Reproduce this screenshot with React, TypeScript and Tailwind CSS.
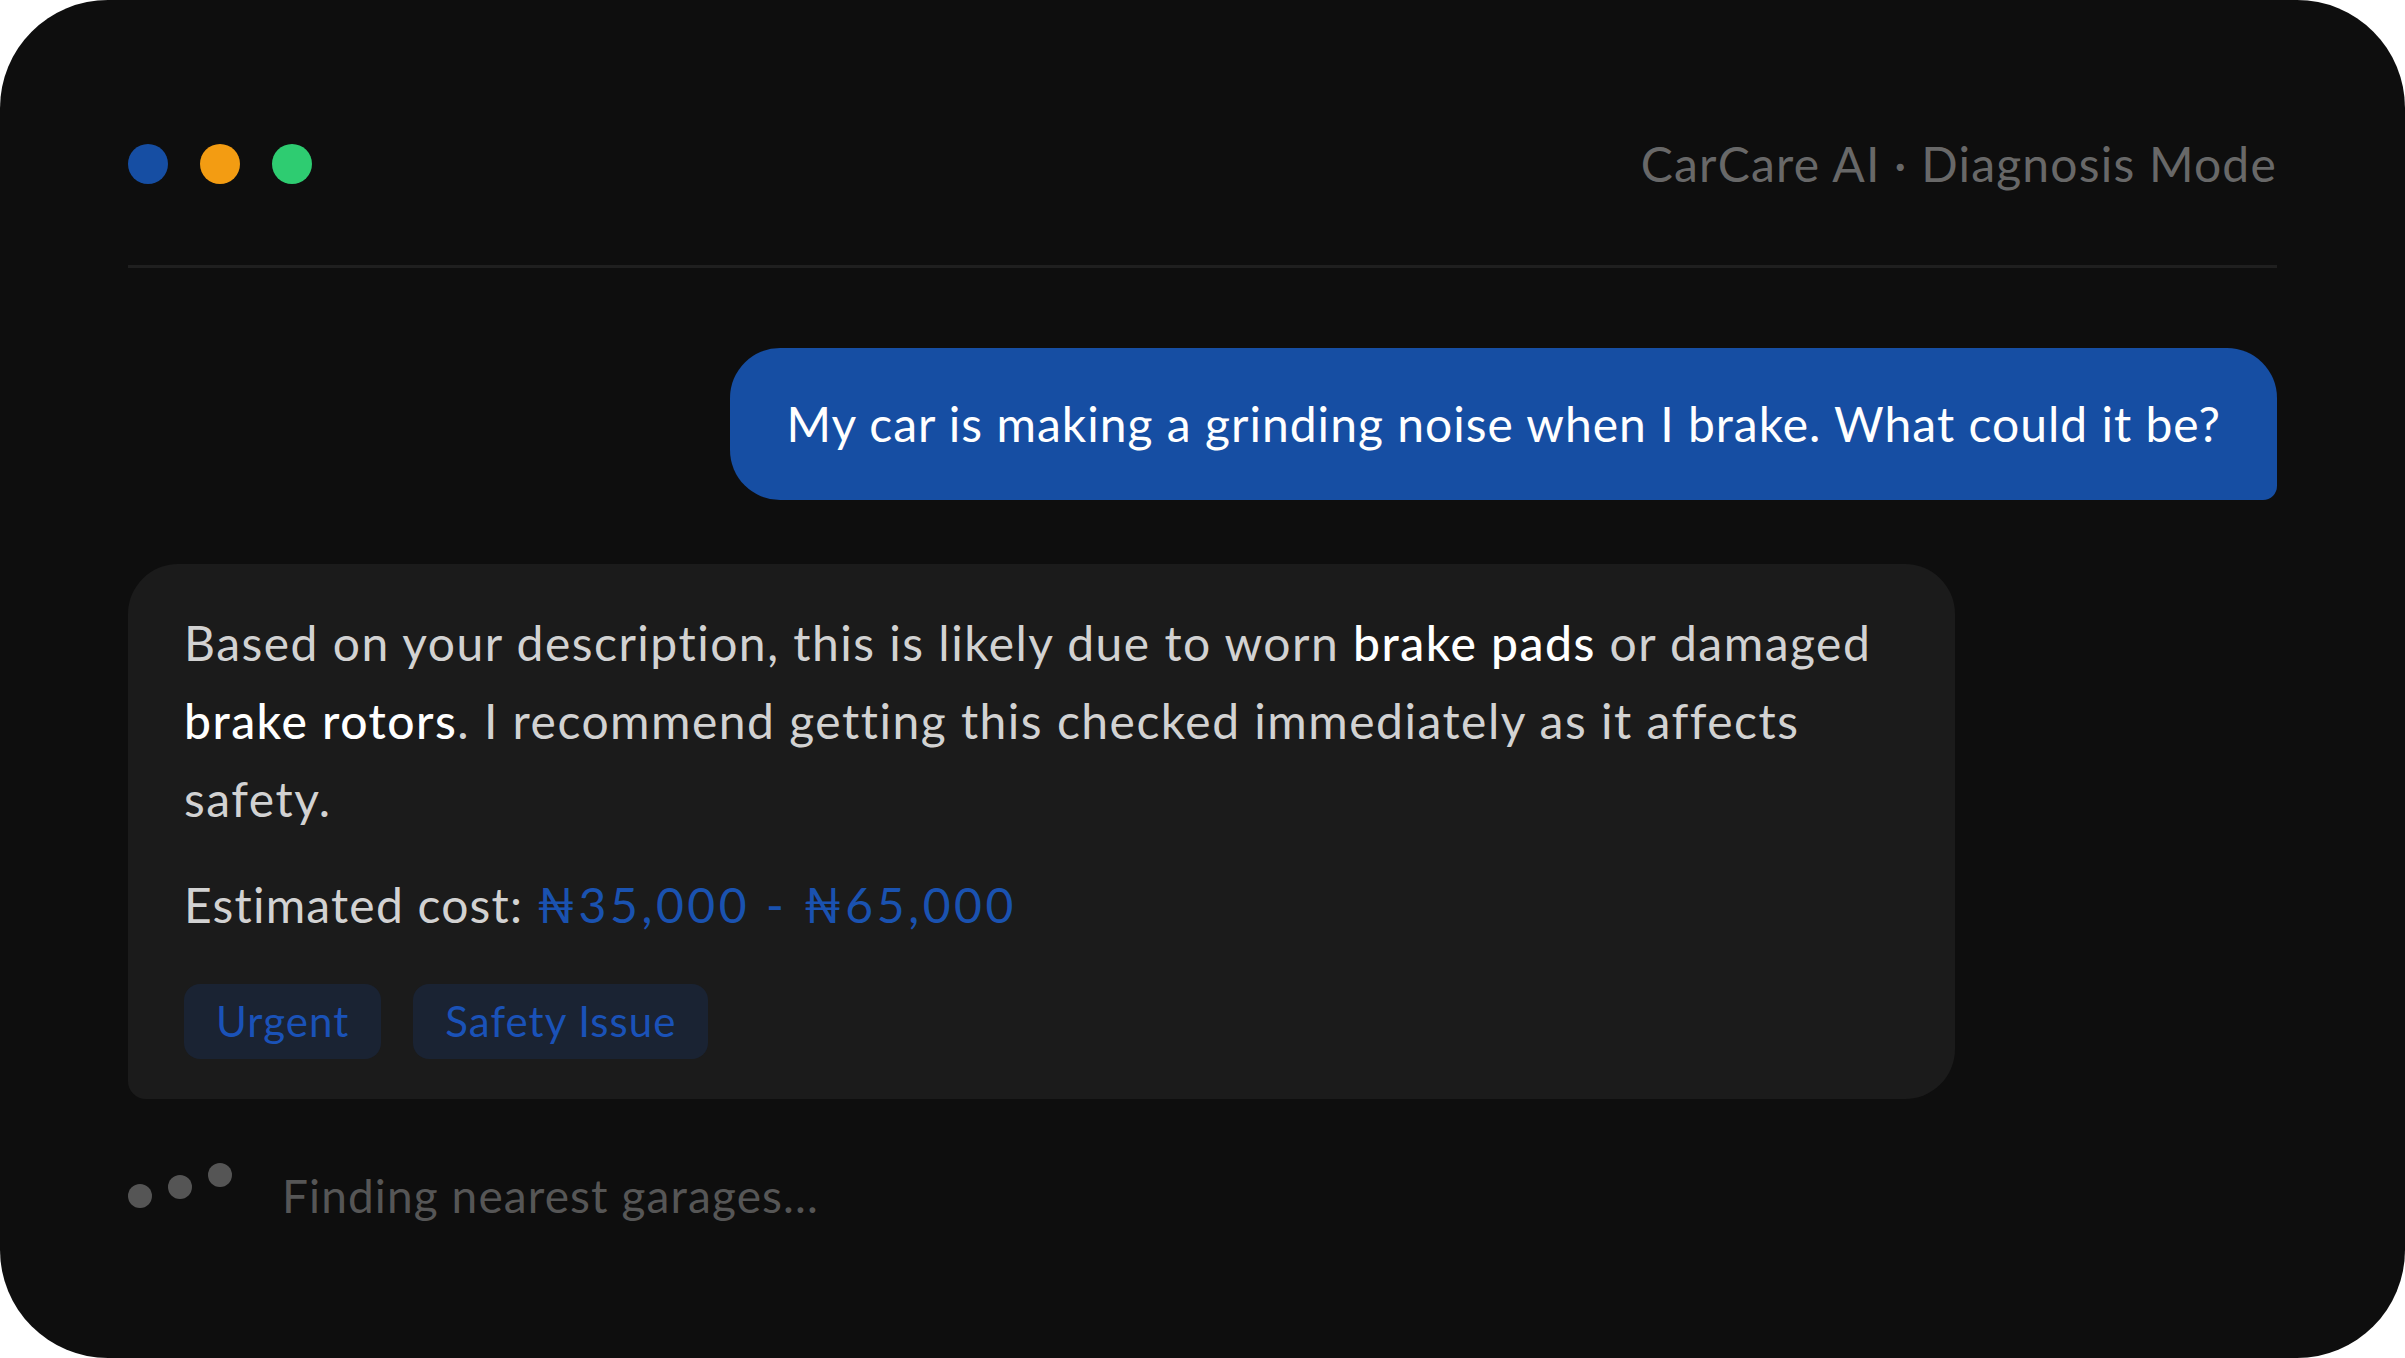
import React from "react";

type Tag = { label: string };

const tags: Tag[] = [{ label: "Urgent" }, { label: "Safety Issue" }];

const WindowDots = () => (
  <div className="flex items-center gap-8">
    <span className="size-10 rounded-full bg-[#164ea3]" />
    <span className="size-10 rounded-full bg-[#f39c12]" />
    <span className="size-10 rounded-full bg-[#2ecc71]" />
  </div>
);

const TypingIndicator = () => (
  <div className="flex h-[66px] items-center">
    <div className="flex items-center gap-4">
      <span className="size-6 rounded-full bg-[#555555]" />
      <span className="size-6 -translate-y-[9px] rounded-full bg-[#555555]" />
      <span className="size-6 -translate-y-[21px] rounded-full bg-[#555555]" />
    </div>
    <span className="ml-[50px] text-[46px] leading-[66px] tracking-[0.024em] text-[#565656]">
      Finding nearest garages...
    </span>
  </div>
);

const App = () => {
  return (
    <div className="min-h-screen bg-white">
      <div className="h-[1358px] w-full rounded-[108px] bg-[#0e0e0e] px-[128px] pt-[128px] font-['Lato',sans-serif]">
        {/* Window header */}
        <div className="flex h-[140px] items-start justify-between border-b-[3px] border-[#1f1f1f]">
          <div className="flex h-[72px] items-center">
            <WindowDots />
          </div>
          <span className="text-[48px] leading-[72px] tracking-[0.025em] text-[#686868]">
            CarCare AI · Diagnosis Mode
          </span>
        </div>

        {/* Conversation */}
        <div className="mt-[80px] flex flex-col gap-16">
          <div className="max-w-[85%] self-end rounded-[50px] rounded-br-[14px] bg-[#164ea3] px-14 py-10">
            <p className="text-[48px] leading-[72px] tracking-[0.021em] text-white">
              My car is making a grinding noise when I brake. What could it be?
            </p>
          </div>

          <div className="max-w-[85%] self-start rounded-[50px] rounded-bl-[18px] bg-[#1b1b1b] px-14 py-10">
            <p className="text-[48px] leading-[78px] tracking-[0.031em] text-[#d2d2d2]">
              Based on your description, this is likely due to worn{" "}
              <span className="font-medium text-white">brake pads</span> or damaged{" "}
              <span className="font-medium text-white">brake rotors</span>. I recommend getting
              this checked immediately as it affects safety.
            </p>
            <p className="mt-7 text-[48px] leading-[78px] tracking-[0.025em] text-[#d2d2d2]">
              Estimated cost:{" "}
              <span className="tracking-[0.075em] text-[#1a52b0]">₦35,000 - ₦65,000</span>
            </p>
            <div className="mt-10 flex gap-8">
              {tags.map((tag) => (
                <span
                  key={tag.label}
                  className="flex h-[75px] items-center rounded-2xl bg-[#1a2333] px-8 text-[42px] tracking-[0.025em] text-[#1a52b8]"
                >
                  {tag.label}
                </span>
              ))}
            </div>
          </div>

          <TypingIndicator />
        </div>
      </div>
    </div>
  );
};

export default App;
